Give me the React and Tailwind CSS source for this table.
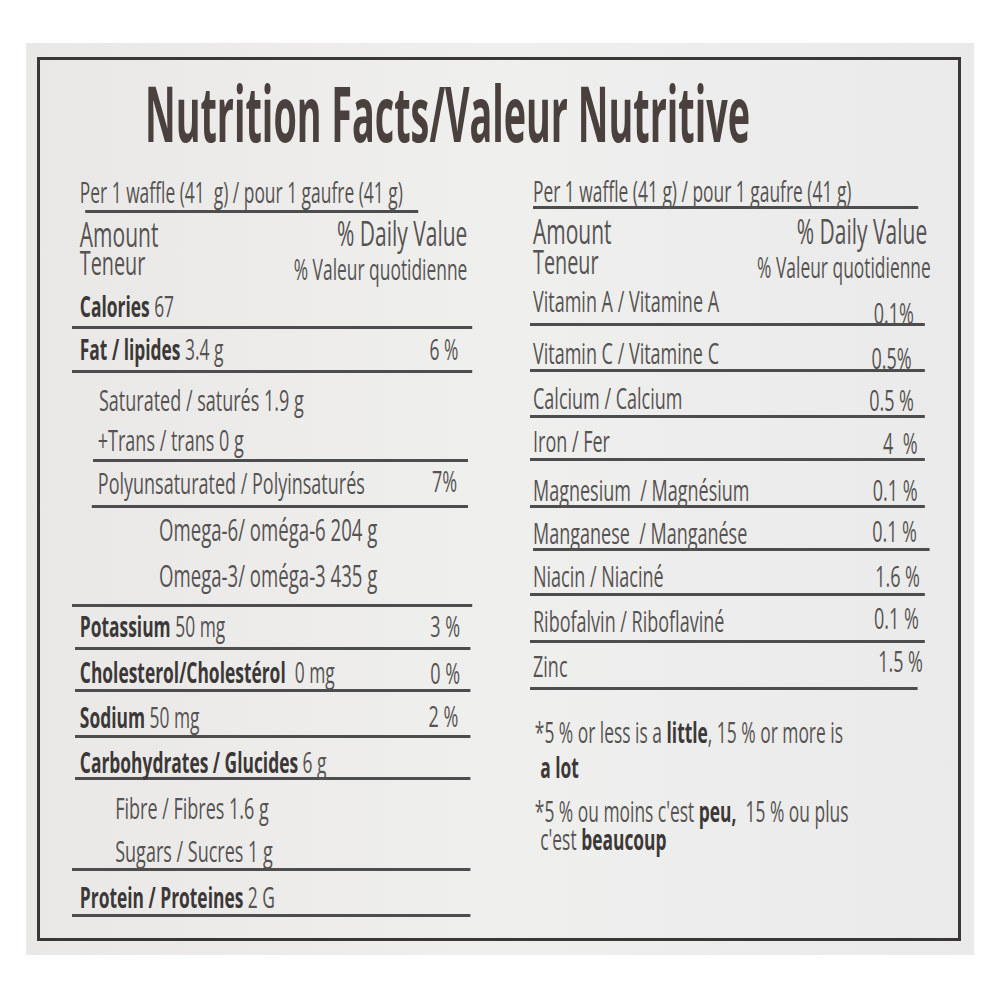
import clsx from 'clsx';

// label text is condensed in the print, so each column is laid out wide and squeezed with scale-x
const Line = ({ className }) => <div className={clsx('h-[3px] bg-[#4d4d4d]', className)} />;

const Row = ({ className, label, value, labelClass, valueClass }) => (
  <div className={clsx('flex items-end justify-between leading-none whitespace-pre', className)}>
    <span className={labelClass}>{label}</span>
    {value && <span className={valueClass}>{value}</span>}
  </div>
);

const B = ({ children }) => <span className="font-bold text-[#3b3837]">{children}</span>;

const LeftColumn = () => (
  <div className="w-[400px] shrink-0">
    <div className="w-[667px] origin-top-left scale-x-[0.6] text-[30px]">
      <Row className="h-[38px]" label="Per 1 waffle (41  g) / pour 1 gaufre (41 g)" labelClass="pl-[13px] pb-[4px] text-[29px]" />
      <Line className="ml-[22px] w-[555px]" />
      <Row
        className="h-[38px]"
        label="Amount"
        labelClass="pl-[13px] text-[35px]"
        value="% Daily Value"
        valueClass="pr-[8px] pb-[1px] text-[35px]"
      />
      <Row
        className="h-[39px]"
        label="Teneur"
        labelClass="pl-[13px] pb-[11px] text-[33px]"
        value="% Valeur quotidienne"
        valueClass="pr-[8px] pb-[7px] text-[29px]"
      />
      <Row className="h-[36px] text-[29px]" label={<><B>Calories</B> 67</>} labelClass="pl-[13px] pb-[6px]" />
      <Line />
      <Row
        className="h-[41px] text-[29px]"
        label={<><B>Fat / lipides</B> 3.4 g</>}
        labelClass="pl-[13px] pb-[7px]"
        value="6 %"
        valueClass="pr-[23px] pb-[7px]"
      />
      <Line />
      <Row className="h-[43px]" label="Saturated / saturés 1.9 g" labelClass="pl-[45px] pb-[1px]" />
      <Row className="h-[43px]" label="+Trans / trans 0 g" labelClass="pl-[43px] pb-[4px]" />
      <Line className="ml-[35px] mr-[7px]" />
      <Row
        className="h-[43px]"
        label="Polyunsaturated / Polyinsaturés"
        labelClass="pl-[43px] pb-[7px]"
        value="7%"
        valueClass="pr-[25px] pb-[9px]"
      />
      <Line className="ml-[33px] mr-[7px]" />
      <Row className="h-[45px]" label="Omega-6/ oméga-6 204 g" labelClass="pl-[145px] pb-[8px] text-[31px]" />
      <Row className="h-[51px]" label="Omega-3/ oméga-3 435 g" labelClass="pl-[145px] pb-[13px] text-[31px]" />
      <Line />
      <Row
        className="h-[40px] text-[29px]"
        label={<><B>Potassium</B> 50 mg</>}
        labelClass="pl-[13px] pb-[7px]"
        value="3 %"
        valueClass="pr-[20px] pb-[6px] text-[30px]"
      />
      <Line className="ml-[5px] mr-[3px]" />
      <Row
        className="h-[39px] text-[29px]"
        label={<><B>Cholesterol/Cholestérol</B>  0 mg</>}
        labelClass="pl-[13px] pb-[3px]"
        value="0 %"
        valueClass="pr-[20px] pb-[1px] text-[30px]"
      />
      <Line className="ml-[5px] mr-[3px]" />
      <Row
        className="h-[43px] text-[29px]"
        label={<><B>Sodium</B> 50 mg</>}
        labelClass="pl-[13px] pb-[4px]"
        value="2 %"
        valueClass="pr-[23px] pb-[4px] text-[30px]"
      />
      <Line className="ml-[5px] mr-[3px]" />
      <Row className="h-[39px] text-[29px]" label={<><B>Carbohydrates / Glucides</B> 6 g</>} labelClass="pl-[13px] pb-[1px]" />
      <Line className="ml-[5px] mr-[3px]" />
      <Row className="h-[45px]" label="Fibre / Fibres 1.6 g" labelClass="pl-[72px] pb-[2px]" />
      <Row className="h-[43px]" label="Sugars / Sucres 1 g" labelClass="pl-[72px] pb-[2px]" />
      <Line className="mr-[3px]" />
      <Row className="h-[43px] text-[29px]" label={<><B>Protein / Proteines</B> 2 G</>} labelClass="pl-[13px] pb-[3px]" />
      <Line className="mr-[3px]" />
    </div>
  </div>
);

const RightColumn = () => (
  <div className="w-[395px] shrink-0">
    <div className="w-[658px] origin-top-left scale-x-[0.6] text-[30px]">
      <Row className="h-[34px]" label="Per 1 waffle (41 g) / pour 1 gaufre (41 g)" labelClass="pl-[5px] pb-[1px] text-[29px]" />
      <Line className="ml-[5px] w-[642px]" />
      <Row
        className="h-[40px] -mr-[4px]"
        label="Amount"
        labelClass="pl-[5px] pb-[1px] text-[35px]"
        value="% Daily Value"
        valueClass="pb-[1px] text-[35px]"
      />
      <Row
        className="h-[41px] -mr-[10px]"
        label="Teneur"
        labelClass="pl-[5px] pb-[12px] text-[33px]"
        value="% Valeur quotidienne"
        valueClass="pb-[9px] text-[29px]"
      />
      <Row
        className="h-[33px]"
        label="Vitamin A / Vitamine A"
        labelClass="pl-[5px] pb-[7px]"
        value="0.1%"
        valueClass="pr-[18px] translate-y-[5px]"
      />
      <Line />
      <Row
        className="h-[43px]"
        label="Vitamin C / Vitamine C"
        labelClass="pl-[5px] pb-[1px]"
        value="0.5%"
        valueClass="pr-[22px] translate-y-[4px]"
      />
      <Line />
      <Row
        className="h-[43px]"
        label="Calcium / Calcium"
        labelClass="pl-[5px] pb-[2px]"
        value="0.5 %"
        valueClass="pr-[18px]"
      />
      <Line />
      <Row
        className="h-[40px]"
        label="Iron / Fer"
        labelClass="pl-[5px] pb-[2px]"
        value="4  %"
        valueClass="pr-[12px]"
      />
      <Line />
      <Row
        className="h-[44px]"
        label="Magnesium  / Magnésium"
        labelClass="pl-[5px]"
        value="0.1 %"
        valueClass="pr-[12px]"
      />
      <Line />
      <Row
        className="h-[40px]"
        label="Manganese  / Manganése"
        labelClass="pl-[5px]"
        value="0.1 %"
        valueClass="pr-[13px] pb-[2px]"
      />
      <Line className="ml-[5px] -mr-[8px]" />
      <Row
        className="h-[42px]"
        label="Niacin / Niaciné"
        labelClass="pl-[5px] pb-[2px]"
        value="1.6 %"
        valueClass="pr-[8px] pb-[2px]"
      />
      <Line />
      <Row
        className="h-[44px]"
        label="Ribofalvin / Riboflaviné"
        labelClass="pl-[5px] pb-[4px]"
        value="0.1 %"
        valueClass="pr-[10px] pb-[7px]"
      />
      <Line />
      <Row
        className="h-[44px]"
        label="Zinc"
        labelClass="pl-[5px] pb-[6px]"
        value="1.5 %"
        valueClass="pr-[3px] pb-[11px]"
      />
      <Line className="mr-[12px]" />
      <div className="text-[29px]">
        <Row className="h-[58px]" label={<>*5 % or less is a <B>little</B>, 15 % or more is</>} labelClass="pl-[8px] pb-[2px]" />
        <Row className="h-[34px]" label={<B>a lot</B>} labelClass="pl-[17px] pb-[1px]" />
        <Row className="h-[44px]" label={<>*5 % ou moins c'est <B>peu,</B>  15 % ou plus</>} labelClass="pl-[8px] pb-[1px]" />
        <Row className="h-[28px]" label={<>c'est <B>beaucoup</B></>} labelClass="pl-[17px] pb-[1px]" />
      </div>
    </div>
  </div>
);

export default function App() {
  return (
    <div className="min-h-screen bg-white pt-[43px] pl-[26px] font-['Open_Sans',sans-serif] text-[#565352]">
      <div className="w-[948px] h-[912px] pt-[14px] pl-[11px] bg-linear-to-r from-[#e9e8e7] via-[#efefee] to-[#eaeaea]">
        <div className="w-[924px] h-[884px] border-[3px] border-[#3a3737]">
          <div className="h-[112px] flex items-end pl-[105px] pb-[21px]">
            <div className="w-[600px]">
              <div className="origin-left scale-x-[0.49] whitespace-nowrap text-[77px] font-bold leading-none text-[#4a403e]">
                Nutrition Facts/Valeur Nutritive
              </div>
            </div>
          </div>
          <div className="flex pl-[32px] gap-[58px]">
            <LeftColumn />
            <RightColumn />
          </div>
        </div>
      </div>
    </div>
  );
}
